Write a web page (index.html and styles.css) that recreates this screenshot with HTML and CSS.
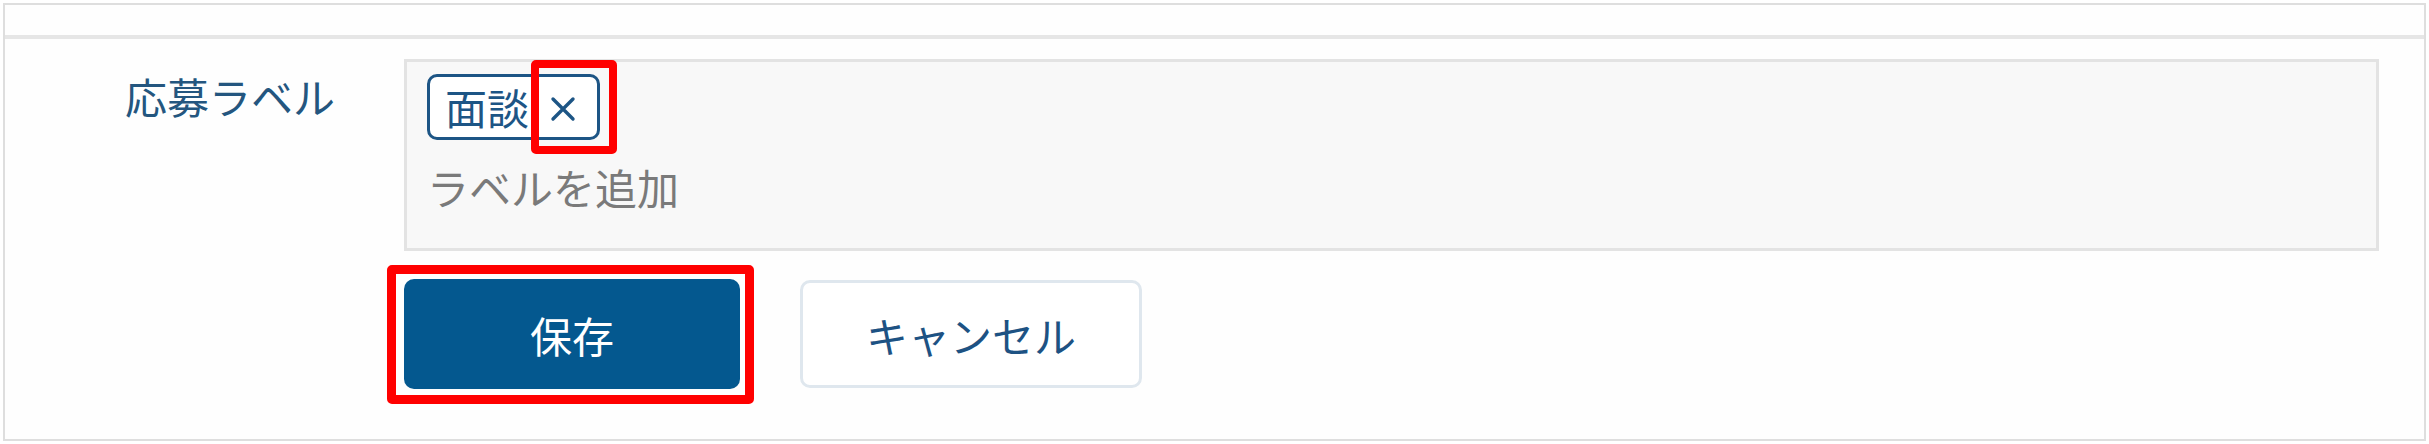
FILE: index.html
```html
<!DOCTYPE html>
<html lang="ja">
<head>
<meta charset="utf-8">
<title>応募ラベル</title>
<link rel="stylesheet" href="styles.css">
</head>
<body>
<div class="frame">
  <div class="frame-head"></div>
  <div class="form-row">
    <div class="label-col">応募ラベル</div>
    <div class="field-col">
      <div class="label-input">
        <div class="tags">
          <span class="tag">面談<span class="tag-remove"><svg width="26" height="26" viewBox="0 0 26 26"><path d="M3 3 L23 23 M23 3 L3 23" stroke="#1d5585" stroke-width="3.4" stroke-linecap="round" fill="none"/></svg></span><span class="mark mark-x"></span></span>
        </div>
        <div class="placeholder">ラベルを追加</div>
      </div>
      <div class="actions">
        <span class="save-wrap"><button class="btn btn-primary">保存</button><span class="mark mark-save"></span></span>
        <button class="btn btn-secondary">キャンセル</button>
      </div>
    </div>
  </div>
</div>
</body>
</html>
```
FILE: styles.css
```css
html, body {
  margin: 0;
  padding: 0;
  background: #ffffff;
}
body {
  font-family: "Noto Sans CJK JP", "Noto Sans", sans-serif;
  width: 2429px;
  height: 444px;
  overflow: hidden;
}
.frame {
  margin: 3px;
  width: 2423px;
  height: 438px;
  box-sizing: border-box;
  border: 2px solid #dedede;
  background: #fefefe;
}
.frame-head {
  height: 30px;
  border-bottom: 4px solid #e6e6e6;
}
.form-row {
  display: grid;
  grid-template-columns: 399px 1975px;
  padding-top: 20px;
}
.label-col {
  padding-left: 120px;
  padding-top: 8px;
  font-size: 42px;
  line-height: 58px;
  color: #24567f;
}
.label-input {
  height: 192px;
  box-sizing: border-box;
  border: 3px solid #e3e3e3;
  background: #f8f8f8;
  padding: 12px 20px 0 20px;
}
.tags {
  display: flex;
}
.tag {
  position: relative;
  display: inline-flex;
  align-items: center;
  height: 66px;
  box-sizing: border-box;
  border: 3px solid #1d5585;
  border-radius: 10px;
  background: #ffffff;
  padding: 0 21px 0 15px;
  font-size: 42px;
  line-height: 60px;
  color: #1d5585;
}
.tag-remove {
  display: inline-flex;
  margin-left: 21px;
  margin-top: 4px;
}
.placeholder {
  margin-top: 18px;
  font-size: 42px;
  line-height: 58px;
  color: #7a7a7a;
}
.actions {
  display: flex;
  gap: 60px;
  margin-top: 28px;
}
.save-wrap {
  position: relative;
  display: inline-flex;
}
.btn {
  font-family: "Noto Sans CJK JP", "Noto Sans", sans-serif;
  font-size: 42px;
  border-radius: 10px;
  box-sizing: border-box;
  cursor: pointer;
}
.btn-primary {
  width: 336px;
  height: 110px;
  border: none;
  background: #04588f;
  color: #ffffff;
}
.btn-secondary {
  width: 342px;
  height: 108px;
  margin-top: 1px;
  border: 3px solid #dfe7ee;
  background: #ffffff;
  color: #1d5283;
}
.mark {
  position: absolute;
  box-sizing: border-box;
  border: 9px solid #ff0000;
  border-radius: 5px;
  pointer-events: none;
}
.mark-x {
  left: 101px;
  top: -17px;
  width: 86px;
  height: 94px;
  border-width: 8px;
}
.mark-save {
  left: -17px;
  top: -14px;
  width: 367px;
  height: 139px;
}
```
